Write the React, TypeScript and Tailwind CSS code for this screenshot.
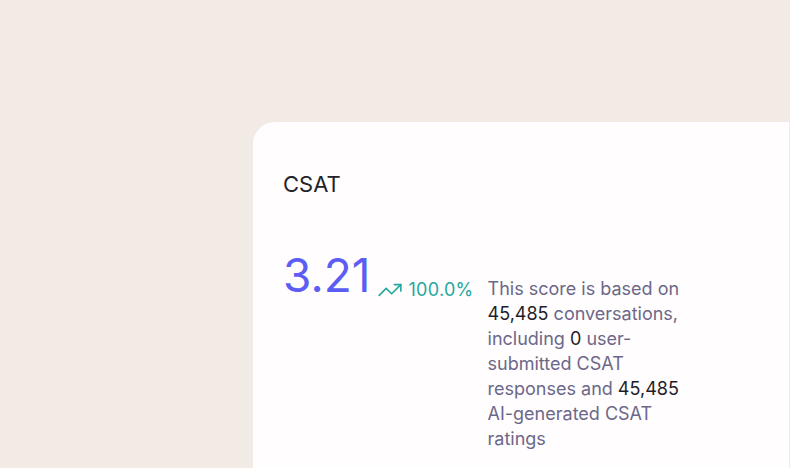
import React from 'react';

const TrendUp = () => (
  <svg width="26" height="26" viewBox="0 0 24 24" fill="none" stroke="currentColor" strokeWidth="1.5" strokeLinecap="round" strokeLinejoin="round">
    <polyline points="22 7 13.5 15.5 8.5 10.5 2 17" />
    <polyline points="16 7 22 7 22 13" />
  </svg>
);

export default function App() {
  return (
    <div
      className="w-[790px] h-[468px] overflow-hidden bg-[#f2eae5] pl-[253px] pt-[122px]"
      style={{ fontFamily: 'Inter, "Noto Sans", sans-serif' }}
    >
      <div className="w-[536px] h-[360px] bg-[#fffdfd] rounded-tl-[22px] pl-[30px] pt-[48px]">
        {/* Title */}
        <h2 className="text-[22px] leading-[28px] text-[#24232b]">CSAT</h2>

        {/* Score row */}
        <div className="flex items-start">
          <div className="mt-[54px] text-[46px] leading-[46px] text-[#5b5df3]">3.21</div>
          <div className="mt-[79px] ml-[7px] flex items-center gap-[5px] text-[#27a79c]">
            <TrendUp />
            <span className="text-[18px] leading-[24px] tracking-[0.3px]">100.0%</span>
          </div>
          <p className="mt-[78px] ml-[14px] w-[200px] text-[18px] leading-[25px] text-[#6c6889]">
            This score is based on <span className="text-[#1f1e28]">45,485</span> conversations,
            including <span className="text-[#1f1e28]">0</span> user-submitted CSAT responses and{' '}
            <span className="text-[#1f1e28]">45,485</span> AI-generated CSAT ratings
          </p>
        </div>
      </div>
    </div>
  );
}
